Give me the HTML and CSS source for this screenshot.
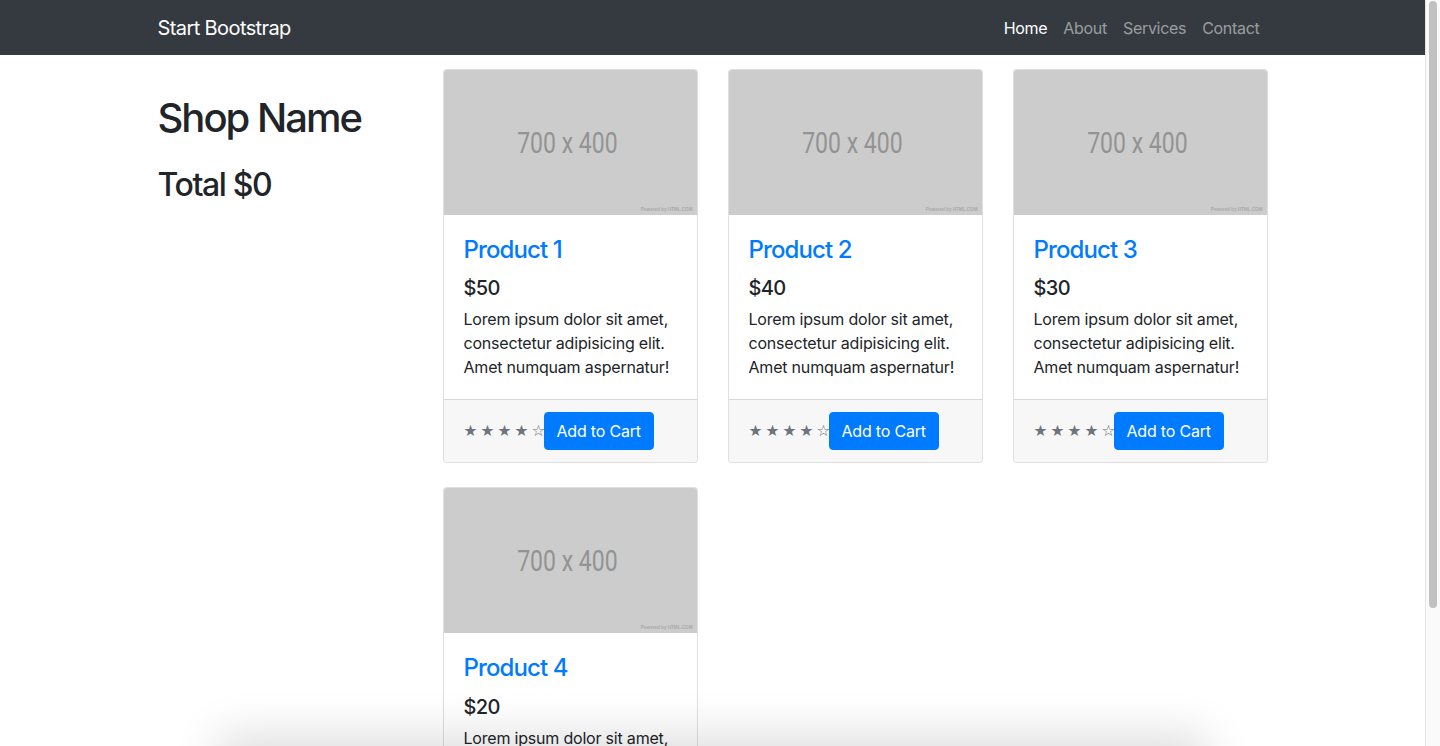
FILE: index.html
```html
<!DOCTYPE html>
<html lang="en">
<head>
<meta charset="utf-8">
<title>Shop Homepage - Start Bootstrap</title>
<link rel="stylesheet" href="styles.css">
</head>
<body>
<nav class="navbar">
  <div class="container navbar-inner">
    <a class="brand" href="#">Start Bootstrap</a>
    <ul class="nav-links">
      <li><a class="nav-link active" href="#">Home</a></li>
      <li><a class="nav-link" href="#">About</a></li>
      <li><a class="nav-link" href="#">Services</a></li>
      <li><a class="nav-link" href="#">Contact</a></li>
    </ul>
  </div>
</nav>

<main class="container page">
  <aside class="sidebar">
    <h1 class="shop-name">Shop Name</h1>
    <h2 class="total">Total $0</h2>
  </aside>

  <section class="products">
    <div class="card">
      <div class="card-img"><span class="img-label">700 x 400</span><span class="img-credit">Powered by HTML.COM</span></div>
      <div class="card-body">
        <h4 class="card-title"><a href="#">Product 1</a></h4>
        <h5 class="price">$50</h5>
        <p class="card-text">Lorem ipsum dolor sit amet, consectetur adipisicing elit. Amet numquam aspernatur!</p>
      </div>
      <div class="card-footer"><small class="stars">&#9733; &#9733; &#9733; &#9733; &#9734;</small><button class="btn">Add to Cart</button></div>
    </div>

    <div class="card">
      <div class="card-img"><span class="img-label">700 x 400</span><span class="img-credit">Powered by HTML.COM</span></div>
      <div class="card-body">
        <h4 class="card-title"><a href="#">Product 2</a></h4>
        <h5 class="price">$40</h5>
        <p class="card-text">Lorem ipsum dolor sit amet, consectetur adipisicing elit. Amet numquam aspernatur!</p>
      </div>
      <div class="card-footer"><small class="stars">&#9733; &#9733; &#9733; &#9733; &#9734;</small><button class="btn">Add to Cart</button></div>
    </div>

    <div class="card">
      <div class="card-img"><span class="img-label">700 x 400</span><span class="img-credit">Powered by HTML.COM</span></div>
      <div class="card-body">
        <h4 class="card-title"><a href="#">Product 3</a></h4>
        <h5 class="price">$30</h5>
        <p class="card-text">Lorem ipsum dolor sit amet, consectetur adipisicing elit. Amet numquam aspernatur!</p>
      </div>
      <div class="card-footer"><small class="stars">&#9733; &#9733; &#9733; &#9733; &#9734;</small><button class="btn">Add to Cart</button></div>
    </div>

    <div class="card">
      <div class="card-img"><span class="img-label">700 x 400</span><span class="img-credit">Powered by HTML.COM</span></div>
      <div class="card-body">
        <h4 class="card-title"><a href="#">Product 4</a></h4>
        <h5 class="price">$20</h5>
        <p class="card-text">Lorem ipsum dolor sit amet, consectetur adipisicing elit. Amet numquam aspernatur!</p>
      </div>
      <div class="card-footer"><small class="stars">&#9733; &#9733; &#9733; &#9733; &#9734;</small><button class="btn">Add to Cart</button></div>
    </div>
  </section>
</main>

<div class="bottom-shadow"></div>
<div class="scrollbar"><div class="scrollbar-thumb"></div></div>
</body>
</html>
```

FILE: styles.css
```css
* { box-sizing: border-box; }

body {
  margin: 0 15px 0 0;
  font-family: Inter, "Liberation Sans", sans-serif;
  font-size: 16px;
  line-height: 1.5;
  letter-spacing: -0.2px;
  color: #212529;
  background: #fff;
}

a { text-decoration: none; }

.container {
  width: 1140px;
  margin: 0 auto;
  padding: 0 15px;
}

/* navbar */
.navbar { background: #343a40; }
.navbar-inner {
  height: 55px;
  display: flex;
  align-items: center;
  justify-content: space-between;
}
.brand {
  color: #fff;
  font-size: 20px;
  line-height: 30px;
  letter-spacing: -0.6px;
}
.nav-links {
  list-style: none;
  margin: 0;
  padding: 0;
  display: flex;
}
.nav-link {
  display: block;
  padding: 8px 8px;
  letter-spacing: -0.3px;
  color: rgba(255, 255, 255, 0.5);
}
.nav-link.active { color: #fff; }

/* layout */
.page {
  display: flex;
  align-items: flex-start;
  padding-top: 14px;
}
.sidebar {
  width: 255px;
  margin-right: 30px;
  flex-shrink: 0;
}
.shop-name {
  margin: 25px 0 24px;
  font-size: 40px;
  font-weight: 500;
  line-height: 1.2;
  letter-spacing: -2px;
}
.total {
  margin: 0;
  font-size: 32px;
  font-weight: 500;
  line-height: 1.2;
  letter-spacing: -1.4px;
}

.products {
  display: grid;
  grid-template-columns: repeat(3, 255px);
  column-gap: 30px;
  row-gap: 24px;
  padding-bottom: 24px;
}

/* card */
.card {
  border: 1px solid rgba(0, 0, 0, 0.125);
  border-radius: 4px;
  overflow: hidden;
  display: flex;
  flex-direction: column;
  background: #fff;
}
.card-img {
  aspect-ratio: 7 / 4;
  background: #cccccc;
  display: flex;
  align-items: center;
  justify-content: center;
  position: relative;
}
.img-label {
  font-family: Roboto, "Liberation Sans", sans-serif;
  font-size: 29.5px;
  line-height: 1;
  letter-spacing: 0;
  color: #939393;
  transform: scaleX(0.78);
  margin: 2px 6px 0 0;
  white-space: nowrap;
}
.img-credit {
  position: absolute;
  right: 4px;
  bottom: 2px;
  font-family: "Liberation Sans", sans-serif;
  font-size: 4.6px;
  line-height: 1;
  letter-spacing: 0;
  color: #a9a9a9;
  font-weight: 700;
}
.card-body {
  padding: 21px 20px 20px;
  flex: 1;
}
.card-title {
  margin: 0 0 12px;
  font-size: 24px;
  font-weight: 500;
  line-height: 1.2;
  letter-spacing: -0.9px;
}
.card-title a { color: #007bff; }
.price {
  margin: 0 0 7px;
  font-size: 20px;
  font-weight: 500;
  line-height: 1.2;
  letter-spacing: -0.6px;
}
.card-text { margin: 0; }

.card-footer {
  padding: 12px 20px;
  background: #f7f7f7;
  border-top: 1px solid rgba(0, 0, 0, 0.125);
  display: flex;
  align-items: center;
}
.stars {
  font-family: "DejaVu Sans", sans-serif;
  font-size: 15.5px;
  line-height: 1;
  letter-spacing: 0;
  word-spacing: -1.8px;
  color: #6c757d;
  white-space: nowrap;
  margin-right: -2px;
}
.btn {
  font-family: inherit;
  font-size: 16px;
  line-height: 24px;
  letter-spacing: -0.2px;
  padding: 6px 12px;
  border: 1px solid #007bff;
  border-radius: 4px;
  background: #007bff;
  color: #fff;
  cursor: pointer;
}

.bottom-shadow {
  position: fixed;
  left: 230px;
  right: 245px;
  bottom: -40px;
  height: 40px;
  box-shadow: 0 0 45px 12px rgba(0, 0, 0, 0.13);
  pointer-events: none;
}

/* fake scrollbar overlay */
.scrollbar {
  position: fixed;
  top: 0;
  right: 0;
  bottom: 0;
  width: 15px;
  background: #fafafa;
  border-left: 1px solid #e4e4e4;
}
.scrollbar-thumb {
  margin: 1px 3px 0 3px;
  height: 607px;
  background: #c1c1c1;
  border-radius: 4px;
}
```
